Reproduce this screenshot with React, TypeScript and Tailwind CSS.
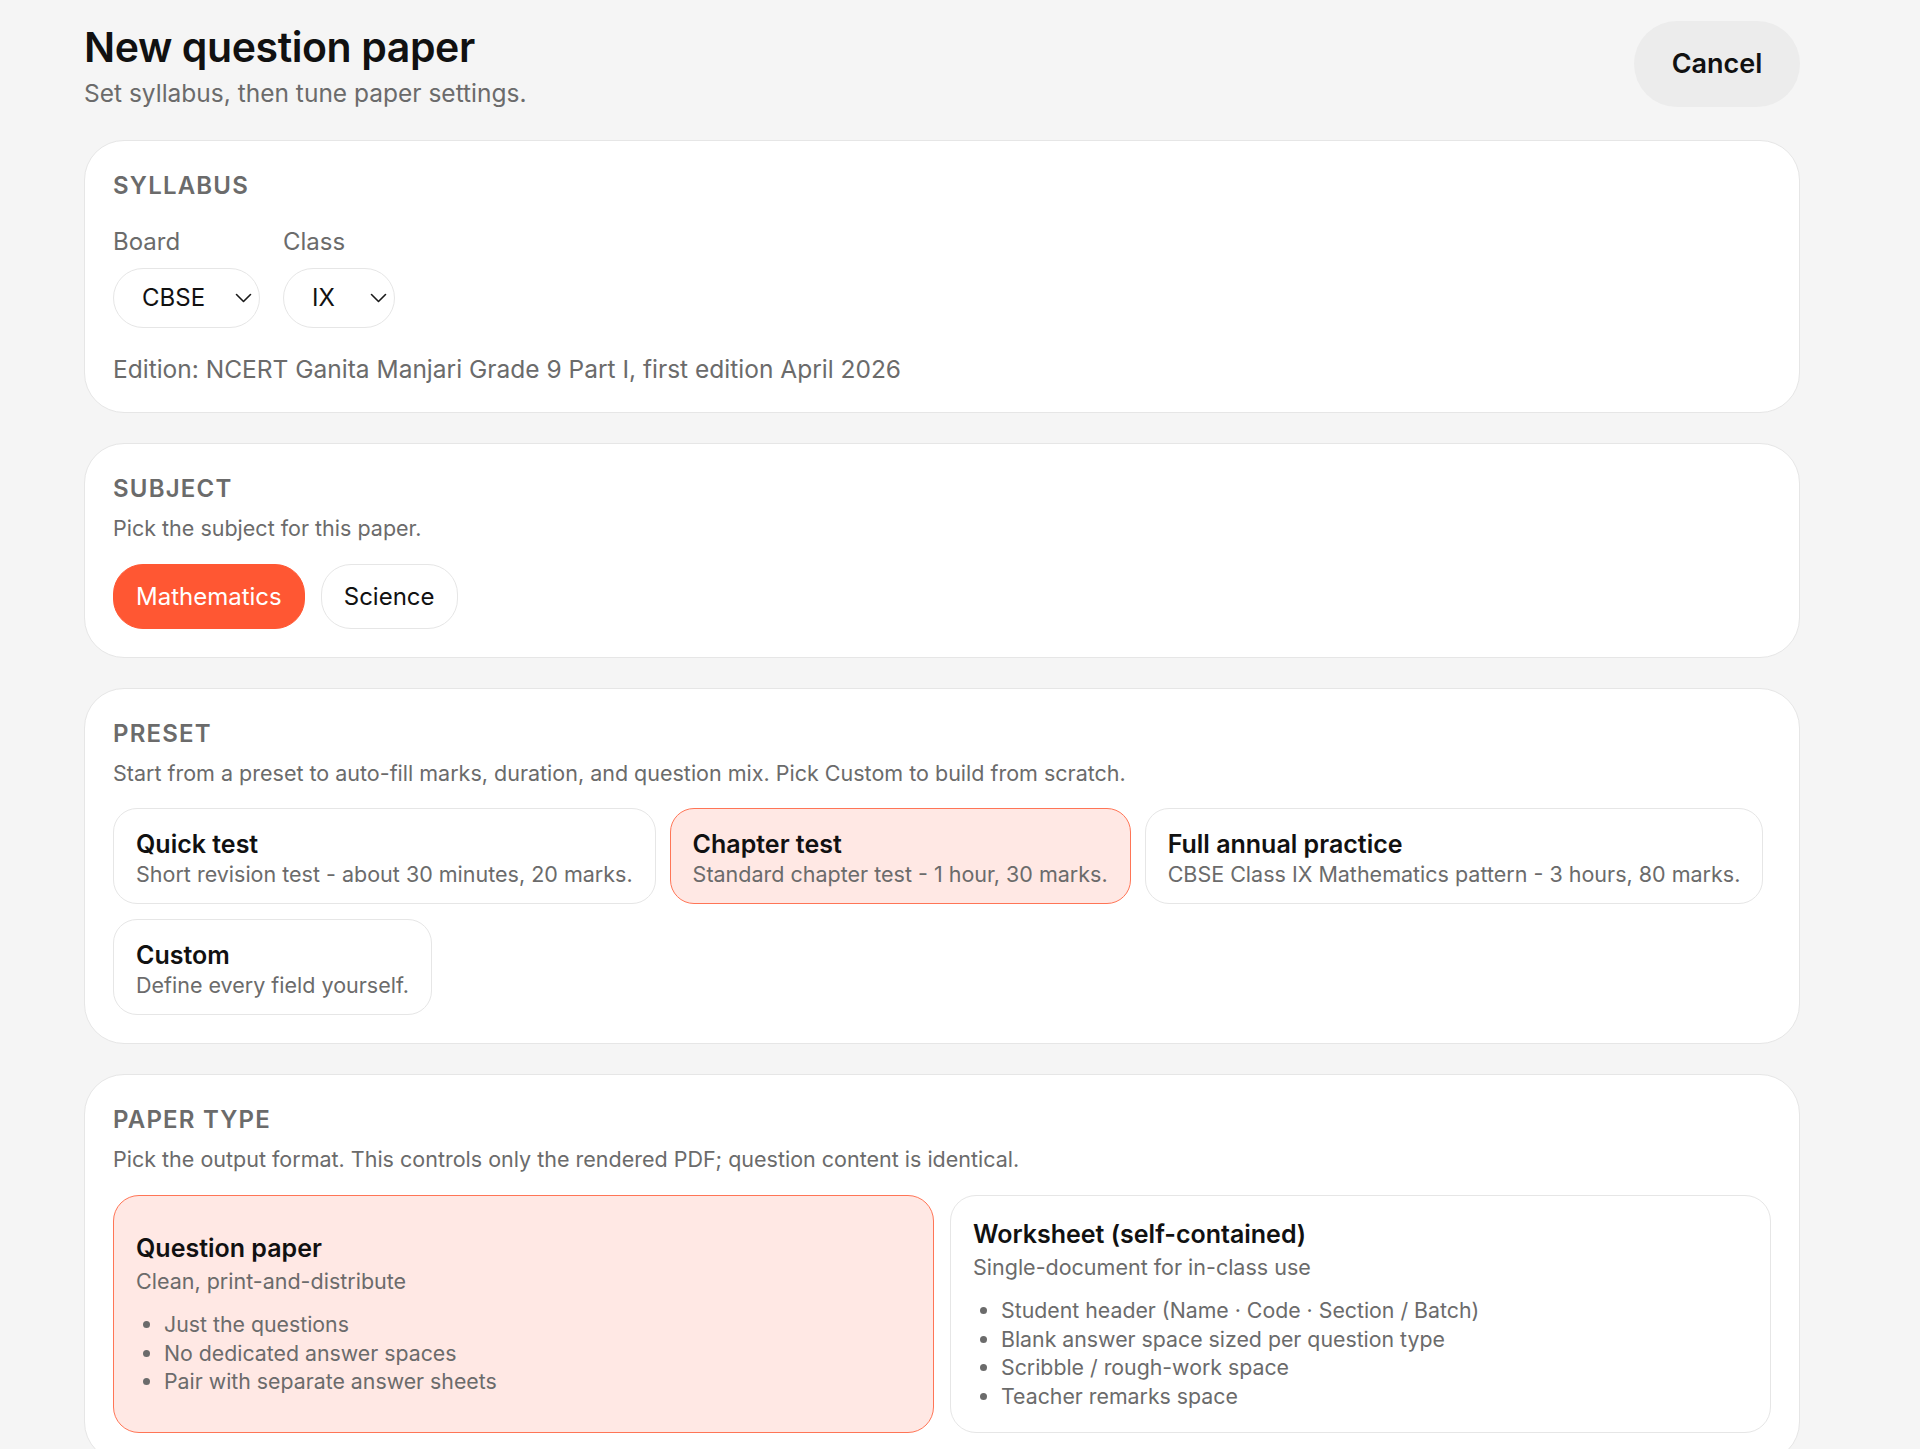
import React, { useState } from 'react';

type Preset = { id: string; title: string; desc: string };

const presets: Preset[] = [
  { id: 'quick', title: 'Quick test', desc: 'Short revision test - about 30 minutes, 20 marks.' },
  { id: 'chapter', title: 'Chapter test', desc: 'Standard chapter test - 1 hour, 30 marks.' },
  { id: 'annual', title: 'Full annual practice', desc: 'CBSE Class IX Mathematics pattern - 3 hours, 80 marks.' },
  { id: 'custom', title: 'Custom', desc: 'Define every field yourself.' },
];

const paperTypes = [
  {
    id: 'question',
    title: 'Question paper',
    desc: 'Clean, print-and-distribute',
    points: ['Just the questions', 'No dedicated answer spaces', 'Pair with separate answer sheets'],
  },
  {
    id: 'worksheet',
    title: 'Worksheet (self-contained)',
    desc: 'Single-document for in-class use',
    points: [
      'Student header (Name · Code · Section / Batch)',
      'Blank answer space sized per question type',
      'Scribble / rough-work space',
      'Teacher remarks space',
    ],
  },
];

const Chevron = () => (
  <svg width="17" height="10" viewBox="0 0 17 10" fill="none" className="shrink-0">
    <path d="M1.5 1.5 8.5 8.5 15.5 1.5" stroke="#1a1a1a" strokeWidth="1.6" strokeLinecap="round" strokeLinejoin="round" />
  </svg>
);

const Section: React.FC<{ title: string; hint?: string; children: React.ReactNode }> = ({ title, hint, children }) => (
  <section className="rounded-[40px] border border-[#e6e6e6] bg-white px-7 pt-[30px] pb-[28px]">
    <h2 className="text-[24px] leading-[30px] font-semibold uppercase tracking-[0.05em] text-[#6b6b6b]">{title}</h2>
    {hint && <p className="mt-[10px] text-[21.5px] leading-[28px] text-[#6b6b6b]">{hint}</p>}
    {children}
  </section>
);

const SelectBox: React.FC<{ label: string; value: string; width: string }> = ({ label, value, width }) => (
  <div className="flex flex-col gap-[11px]">
    <span className="text-[24px] leading-[30px] text-[#6b6b6b]">{label}</span>
    <div className={`${width} flex h-[60px] items-center justify-between rounded-[30px] border border-[#e6e6e6] bg-white pl-[28px] pr-[7px]`}>
      <span className="text-[24px] text-[#111]">{value}</span>
      <Chevron />
    </div>
  </div>
);

export default function App() {
  const [subject, setSubject] = useState('Mathematics');
  const [preset, setPreset] = useState('chapter');
  const [paperType, setPaperType] = useState('question');

  return (
    <div className="min-h-screen bg-[#f5f5f5] font-['Inter',sans-serif] text-[#111]">
      <div className="pl-[84px] pr-[120px] pt-[21px] pb-[40px]">
        <header className="flex items-start justify-between">
          <div className="pt-[3px]">
            <h1 className="text-[41px] leading-[46px] font-semibold tracking-[-0.01em] text-[#111]">New question paper</h1>
            <p className="mt-[8px] text-[24.5px] leading-[30px] text-[#6b6b6b]">Set syllabus, then tune paper settings.</p>
          </div>
          <button className="h-[86px] w-[166px] rounded-full bg-[#ececec] text-[27px] font-semibold text-[#111]">Cancel</button>
        </header>

        <div className="mt-[32px] flex flex-col gap-[30px]">
          <Section title="Syllabus">
            <div className="mt-[26px] flex gap-[23px]">
              <SelectBox label="Board" value="CBSE" width="w-[147px]" />
              <SelectBox label="Class" value="IX" width="w-[112px]" />
            </div>
            <p className="mt-[26px] text-[24.5px] leading-[30px] text-[#6b6b6b]">
              Edition: NCERT Ganita Manjari Grade 9 Part I, first edition April 2026
            </p>
          </Section>

          <Section title="Subject" hint="Pick the subject for this paper.">
            <div className="mt-[22px] flex gap-4">
              {['Mathematics', 'Science'].map((s) => (
                <button
                  key={s}
                  onClick={() => setSubject(s)}
                  className={
                    s === subject
                      ? 'h-[65px] rounded-[30px] border border-[#ff5733] bg-[#ff5733] px-[22px] text-[24px] text-white'
                      : 'h-[65px] rounded-[30px] border border-[#e6e6e6] bg-white px-[22px] text-[24px] text-[#111]'
                  }
                >
                  {s}
                </button>
              ))}
            </div>
          </Section>

          <Section
            title="Preset"
            hint="Start from a preset to auto-fill marks, duration, and question mix. Pick Custom to build from scratch."
          >
            <div className="mt-[21px] flex flex-wrap gap-x-[14px] gap-y-[15px]">
              {presets.map((p) => (
                <button
                  key={p.id}
                  onClick={() => setPreset(p.id)}
                  className={
                    p.id === preset
                      ? 'flex flex-col items-start rounded-[24px] border border-[#ff7556] bg-[#ffe8e4] px-[22px] pt-[19px] pb-[15px] text-left'
                      : 'flex flex-col items-start rounded-[24px] border border-[#e6e6e6] bg-white px-[22px] pt-[19px] pb-[15px] text-left'
                  }
                >
                  <span className="text-[25px] leading-[32px] font-semibold text-[#111]">{p.title}</span>
                  <span className="text-[21.5px] leading-[28px] text-[#6b6b6b]">{p.desc}</span>
                </button>
              ))}
            </div>
          </Section>

          <Section
            title="Paper type"
            hint="Pick the output format. This controls only the rendered PDF; question content is identical."
          >
            <div className="mt-[22px] grid grid-cols-2 gap-4">
              {paperTypes.map((t) => (
                <button
                  key={t.id}
                  onClick={() => setPaperType(t.id)}
                  className={
                    t.id === paperType
                      ? 'flex min-h-[236px] flex-col justify-center rounded-[26px] border border-[#ff7556] bg-[#ffe8e4] px-[22px] py-[22px] text-left'
                      : 'flex min-h-[236px] flex-col justify-center rounded-[26px] border border-[#e6e6e6] bg-white px-[22px] py-[22px] text-left'
                  }
                >
                  <span className="text-[25px] leading-[32px] font-semibold text-[#111]">{t.title}</span>
                  <span className="mt-[3px] text-[21.5px] leading-[28px] text-[#6b6b6b]">{t.desc}</span>
                  <ul className="mt-[15px] list-disc pl-7 text-[21.3px] leading-[28.5px] text-[#6b6b6b]">
                    {t.points.map((pt) => (
                      <li key={pt}>{pt}</li>
                    ))}
                  </ul>
                </button>
              ))}
            </div>
          </Section>
        </div>
      </div>
    </div>
  );
}
